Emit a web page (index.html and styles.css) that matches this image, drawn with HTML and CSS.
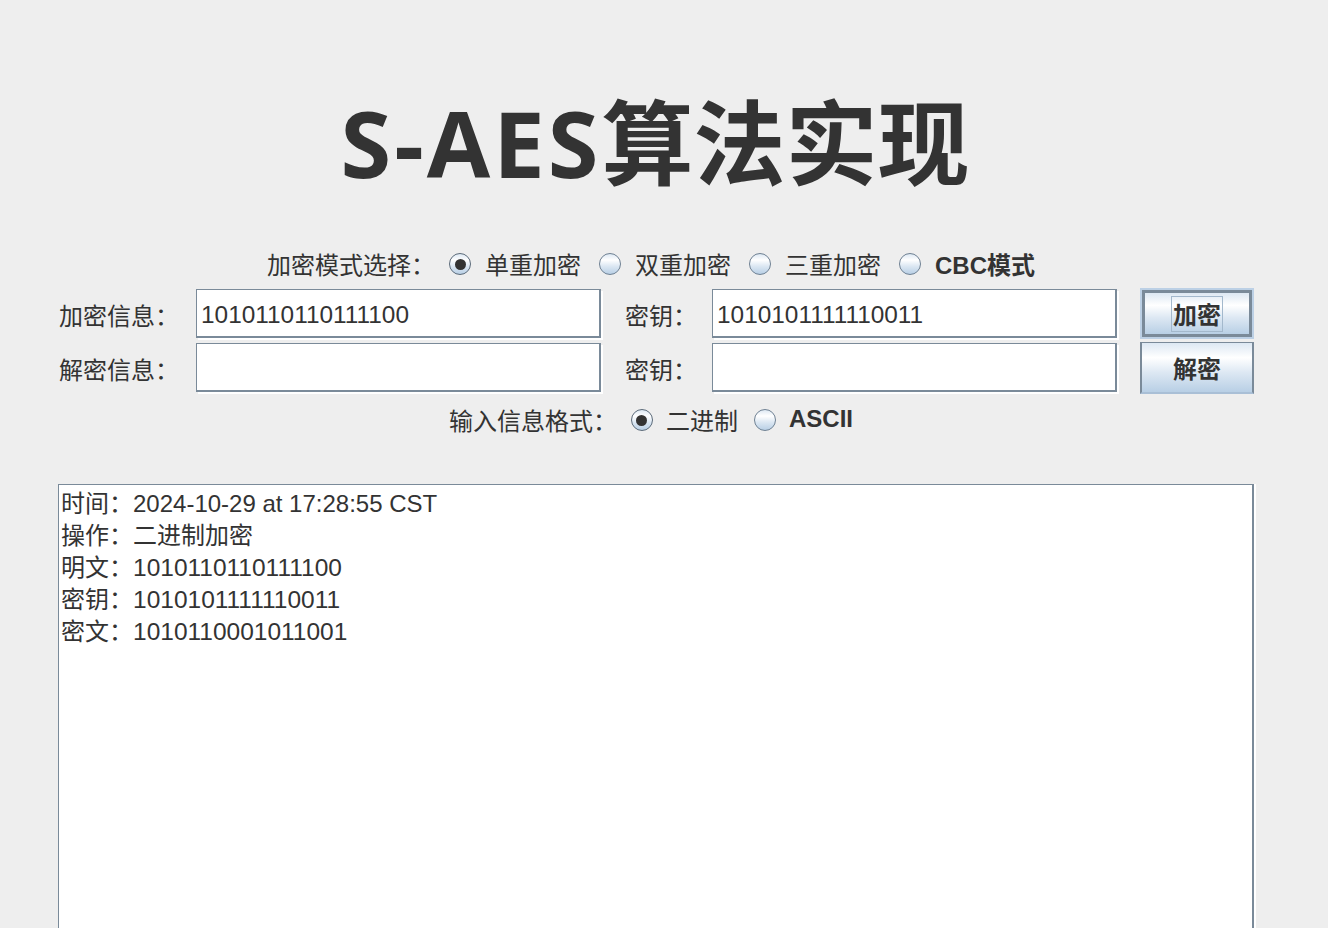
FILE: index.html
```html
<!DOCTYPE html>
<html lang="zh-CN">
<head>
<meta charset="utf-8">
<title>S-AES算法实现</title>
<link rel="stylesheet" href="styles.css">
</head>
<body>
<div class="app">
  <h1 class="title"><span class="latin">S-AES</span>算法实现</h1>

  <div class="radio-row">
    <span class="group-label">加密模式选择：</span>
    <label class="opt"><span class="radio checked"></span><span class="opt-text">单重加密</span></label>
    <label class="opt"><span class="radio"></span><span class="opt-text">双重加密</span></label>
    <label class="opt"><span class="radio"></span><span class="opt-text">三重加密</span></label>
    <label class="opt"><span class="radio"></span><span class="opt-text bold">CBC模式</span></label>
  </div>

  <div class="form-grid">
    <span class="field-label">加密信息：</span>
    <div class="field">1010110110111100</div>
    <span class="field-label key-label">密钥：</span>
    <div class="field">1010101111110011</div>
    <button class="btn default"><span class="focus">加密</span></button>

    <span class="field-label">解密信息：</span>
    <div class="field"></div>
    <span class="field-label key-label">密钥：</span>
    <div class="field"></div>
    <button class="btn"><span class="nofocus">解密</span></button>
  </div>

  <div class="radio-row format-row">
    <span class="group-label">输入信息格式：</span>
    <label class="opt"><span class="radio checked"></span><span class="opt-text">二进制</span></label>
    <label class="opt"><span class="radio"></span><span class="opt-text bold">ASCII</span></label>
  </div>

  <div class="output">
    <div class="line">时间：2024-10-29 at 17:28:55 CST</div>
    <div class="line">操作：二进制加密</div>
    <div class="line">明文：<span class="val">1010110110111100</span></div>
    <div class="line">密钥：<span class="val">1010101111110011</span></div>
    <div class="line">密文：<span class="val">1010110001011001</span></div>
  </div>
</div>
</body>
</html>
```

FILE: styles.css
```css
html, body {
  margin: 0;
  padding: 0;
  background: #eeeeee;
  overflow: hidden;
  height: 928px;
}

.app {
  width: 1302px;
  display: flex;
  flex-direction: column;
  color: #333333;
  font-family: "Noto Sans CJK SC", sans-serif;
}

.title {
  margin: 88px 0 0 0;
  padding-left: 8px;
  height: 110px;
  line-height: 110px;
  text-align: center;
  font-family: "Open Sans", "Noto Sans CJK SC", sans-serif;
  font-weight: 700;
  font-size: 92px;
  color: #333333;
  white-space: nowrap;
}

.title .latin {
  letter-spacing: 3px;
}

.radio-row {
  margin-top: 49px;
  height: 32px;
  display: flex;
  align-items: center;
  justify-content: center;
  font-size: 24px;
}

.group-label {
  margin-right: 14px;
  white-space: nowrap;
}

.opt {
  display: flex;
  align-items: center;
  gap: 14px;
  white-space: nowrap;
}

.opt + .opt {
  margin-left: 18px;
}

.opt-text.bold {
  font-family: "Liberation Sans", "Noto Sans CJK SC", sans-serif;
  font-weight: 700;
}

.radio {
  width: 22px;
  height: 22px;
  box-sizing: border-box;
  border-radius: 50%;
  border: 1px solid #6f8193;
  background: linear-gradient(#dde8f3 0%, #ffffff 30%, #dde8f3 60%, #b8cfe5 100%);
  position: relative;
  flex: none;
  margin-top: 2px;
}

.radio.checked {
  border-color: #5c6b7a;
}

.radio.checked::after {
  content: "";
  position: absolute;
  left: 4.5px;
  top: 4.5px;
  width: 11px;
  height: 11px;
  border-radius: 50%;
  background: #333333;
}

.form-grid {
  margin-top: 10px;
  margin-left: 59px;
  display: grid;
  grid-template-columns: 137px 429px 87px 428px 114px;
  grid-template-rows: 49px 49px;
  row-gap: 5px;
  align-items: center;
}

.field-label {
  font-size: 24px;
  white-space: nowrap;
  line-height: 32px;
  padding-top: 2px;
}

.field {
  width: 405px;
  height: 49px;
  box-sizing: border-box;
  background: #ffffff;
  border-top: 1px solid #7a8a99;
  border-left: 1px solid #7a8a99;
  border-right: 2px solid #7a8a99;
  border-bottom: 2px solid #7a8a99;
  box-shadow: 2px 2px 0 #ffffff;
  padding: 3px 4px 0 4px;
  font-family: "Liberation Sans", "Noto Sans CJK SC", sans-serif;
  font-size: 24.4px;
  line-height: 44px;
  color: #333333;
}

.btn {
  align-self: start;
  margin: 0;
  margin-top: -1px;
  width: 114px;
  height: 52px;
  box-sizing: border-box;
  padding: 0;
  display: flex;
  align-items: center;
  justify-content: center;
  background: linear-gradient(#dde8f3 0%, #ffffff 30%, #dde8f3 60%, #b8cfe5 100%);
  border-top: 1px solid #7a8a99;
  border-left: 2px solid #7a8a99;
  border-right: 2px solid #7a8a99;
  border-bottom: 2px solid #a9bfd6;
  font-family: "Noto Sans CJK SC", sans-serif;
  font-weight: 700;
  font-size: 24px;
  color: #333333;
  cursor: default;
}

.btn.default {
  width: 110px;
  height: 47px;
  margin: 1px 2px 2px 2px;
  border: 3px solid #7a8a99;
  box-shadow: 0 0 0 2px #bcd0e5;
}

.focus {
  display: block;
  padding: 0 1px;
  line-height: 34px;
  outline: 1.5px solid #a3b8cc;
}

.nofocus {
  display: block;
  line-height: 34px;
}

.format-row {
  margin-top: 11px;
}

.format-row .opt {
  gap: 13px;
}

.format-row .opt + .opt {
  margin-left: 16px;
}

.output {
  margin-top: 49px;
  margin-left: 58px;
  width: 1196px;
  height: 460px;
  box-sizing: border-box;
  background: #ffffff;
  border-top: 1px solid #7a8a99;
  border-left: 1px solid #7a8a99;
  border-right: 2px solid #7a8a99;
  box-shadow: 2px 0 0 #ffffff;
  padding: 3px 2px;
  font-family: "Liberation Sans", "Noto Sans CJK SC", sans-serif;
  font-size: 24px;
  line-height: 32px;
  color: #333333;
}

.line {
  white-space: nowrap;
}

.val {
  font-size: 24.5px;
}
```
